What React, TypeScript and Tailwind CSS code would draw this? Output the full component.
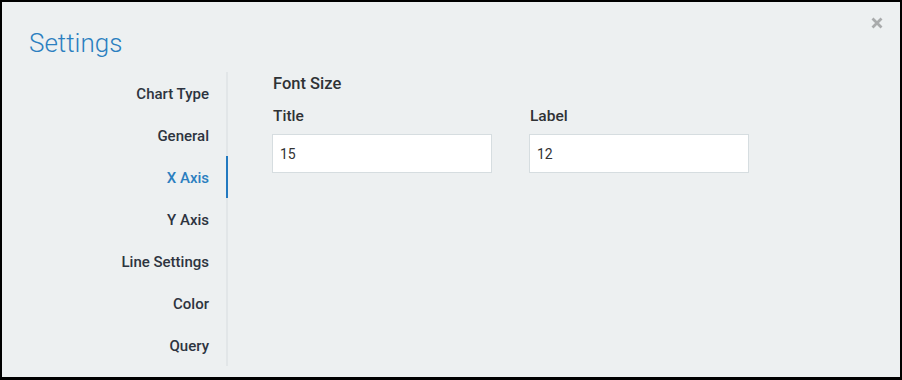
import React from "react";

const navItems = ["Chart Type", "General", "X Axis", "Y Axis", "Line Settings", "Color", "Query"];

export default function App() {
  const active = "X Axis";

  return (
    <div
      className="relative flex h-[380px] w-[902px] flex-col border-2 border-b-[3px] border-black bg-[#edf0f1]"
      style={{ fontFamily: "Roboto, 'Liberation Sans', sans-serif" }}
    >
      <button className="absolute right-[16px] top-[14px] flex h-[14px] w-[14px] items-center justify-center">
        <svg width="12" height="12" viewBox="0 0 12 12">
          <path d="M1.5 1.5L10.5 10.5M10.5 1.5L1.5 10.5" stroke="#a9abac" strokeWidth="2.8" strokeLinecap="butt" />
        </svg>
      </button>

      <div className="h-[70px] pl-[27px] pt-[26px]">
        <h1 className="text-[26px] font-light leading-[30px] text-[#2b7fc0]">Settings</h1>
      </div>

      <div className="flex">
        <nav className="flex w-[226px] flex-col">
          {navItems.map((item) => (
            <div
              key={item}
              className={
                item === active
                  ? "flex h-[42px] items-center justify-end border-r-2 border-[#2279c0] pr-[17px] pt-[2px] text-[15px] font-medium text-[#2b7fc0]"
                  : "flex h-[42px] items-center justify-end border-r-2 border-[#e2e6e8] pr-[17px] pt-[2px] text-[15px] font-medium text-[#2d3440]"
              }
            >
              {item}
            </div>
          ))}
        </nav>

        <div className="flex flex-col pl-[44px] pt-px">
          <div className="pl-px text-[16.5px] font-medium leading-[22px] text-[#2f3235]">Font Size</div>
          <div className="mt-[11px] flex gap-[37px]">
            <div className="flex flex-col">
              <label className="pl-px text-[15.5px] font-medium leading-[20px] text-[#2f3235]">Title</label>
              <input
                defaultValue="15"
                className="mt-[8px] h-[39px] w-[220px] border border-[#d6dde0] bg-white px-[7px] text-[14px] text-[#333] outline-none"
              />
            </div>
            <div className="flex flex-col">
              <label className="pl-px text-[15.5px] font-medium leading-[20px] text-[#2f3235]">Label</label>
              <input
                defaultValue="12"
                className="mt-[8px] h-[39px] w-[220px] border border-[#d6dde0] bg-white px-[7px] text-[14px] text-[#333] outline-none"
              />
            </div>
          </div>
        </div>
      </div>
    </div>
  );
}
